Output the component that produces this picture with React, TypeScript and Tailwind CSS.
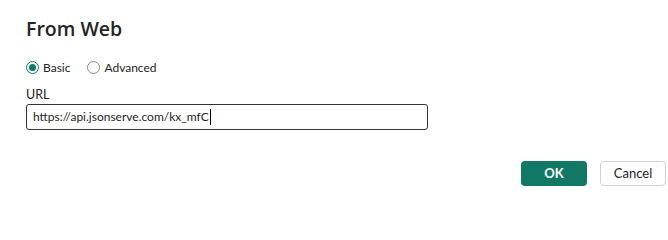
import React, { useState } from "react";

const font = { fontFamily: '"Lato", "Open Sans", sans-serif' };

function Radio({ checked, label, onClick }: { checked: boolean; label: string; onClick: () => void }) {
  return (
    <button onClick={onClick} className="flex items-center gap-[4px] text-[12px] leading-none text-[#242424]">
      <span
        className={`grid h-[13px] w-[13px] place-items-center rounded-full border ${
          checked ? "border-[#117865]" : "border-[#8a8a8a]"
        }`}
      >
        {checked && <span className="h-[7px] w-[7px] rounded-full bg-[#117865]" />}
      </span>
      <span>{label}</span>
    </button>
  );
}

export default function App() {
  const [mode, setMode] = useState("basic");
  return (
    <div style={font} className="h-[200px] w-[668px] bg-white pl-[26px] pr-[2px] pt-[15px] text-[#242424]">
      <h1 style={{ fontFamily: '"Open Sans", sans-serif' }} className="text-[19.5px] font-semibold leading-[28px]">
        From Web
      </h1>

      <div className="mt-[18px] flex items-center gap-[17px]">
        <Radio checked={mode === "basic"} label="Basic" onClick={() => setMode("basic")} />
        <Radio checked={mode === "advanced"} label="Advanced" onClick={() => setMode("advanced")} />
      </div>

      <div className="mt-[14px] text-[12.5px] leading-[14px]">URL</div>
      <div className="mt-[2px] flex h-[26px] w-[402px] items-center rounded-[3px] border border-[#333] px-[6px] text-[12px]">
        <span>https://api.jsonserve.com/kx_mfC</span>
        <span className="ml-[1px] h-[16px] w-[1px] bg-black" />
      </div>

      <div className="mt-[31px] flex justify-end gap-[13px]">
        <button className="h-[25px] w-[66px] rounded-[4px] bg-[#117865] text-[13px] font-bold text-white">OK</button>
        <button className="h-[25px] w-[66px] rounded-[4px] border border-[#d1d1d1] bg-white text-[13px] text-[#242424]">
          Cancel
        </button>
      </div>
    </div>
  );
}
